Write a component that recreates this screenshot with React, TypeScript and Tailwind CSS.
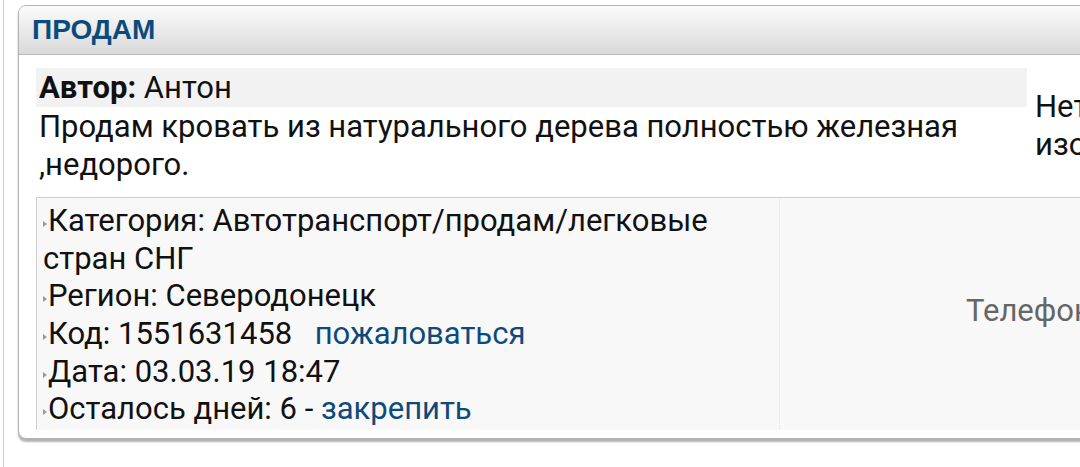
import React from 'react'

const Bullet = () => (
  <span className="inline-block align-baseline mr-[1px] w-0 h-0 border-y-[3px] border-y-transparent border-l-[4px] border-l-[#9a9a9a] relative -top-[4px]" />
)

export default function App() {
  return (
    <div className="w-[1080px] h-[467px] bg-white overflow-hidden" style={{ fontFamily: 'Roboto, "Noto Sans", sans-serif' }}>
      <div className="ml-[3px] h-full border-l border-[#cfcfcf] pt-[5px] pl-[14px]">
        <div className="w-[1120px] border border-[#b3b3b3] rounded-[8px] bg-white shadow-[0_3px_2px_rgba(0,0,0,0.3)] overflow-hidden">
          {/* header */}
          <div className="h-[49px] flex items-center px-[13px] border-b border-[#b8b8b8] bg-gradient-to-b from-[#fbfbfb] to-[#d9d9d9]">
            <span className="text-[28px] font-bold text-[#0b4a7c]" style={{ fontFamily: '"Liberation Sans", Arial, sans-serif' }}>
              ПРОДАМ
            </span>
          </div>

          <div className="pl-[17px] pt-[13px] pb-[8px] text-[31px] leading-[37.6px] text-[#111]">
            <div className="flex">
              <div className="w-[991px] shrink-0">
                <div className="bg-[#f2f2f2] h-[39px] pl-[3px] leading-[39px]">
                  <b className="font-bold">Автор:</b> Антон
                </div>
                <div className="pl-[3px] pt-[1px] pr-[20px]">
                  Продам кровать из натурального дерева полностью железная ,недорого.
                </div>
              </div>
              <div className="pl-[8px] pt-[20px] whitespace-nowrap">
                <div>Нет</div>
                <div>изображения</div>
              </div>
            </div>

            {/* info box */}
            <div className="mt-[14px] flex border-t border-l border-[#cfcfcf] bg-[#f8f8f8] h-[233px]">
              <div className="w-[743px] shrink-0 pl-[6px] pt-[4px] border-r border-[#eeeeee]">
                <div className="pr-[60px]">
                  <Bullet />Категория: Автотранспорт/продам/легковые стран СНГ
                </div>
                <div>
                  <Bullet />Регион: Северодонецк
                </div>
                <div>
                  <Bullet />Код: 1551631458&nbsp;&nbsp;<a className="text-[#0d4a7c] ml-[7px]">пожаловаться</a>
                </div>
                <div>
                  <Bullet />Дата: 03.03.19 18:47
                </div>
                <div>
                  <Bullet />Осталось дней: 6 - <a className="text-[#0d4a7c]">закрепить</a>
                </div>
              </div>
              <div className="flex-1 flex items-center pl-[186px] text-[#666] whitespace-nowrap pb-[6px]">
                Телефон
              </div>
            </div>
          </div>
        </div>
      </div>
    </div>
  )
}
